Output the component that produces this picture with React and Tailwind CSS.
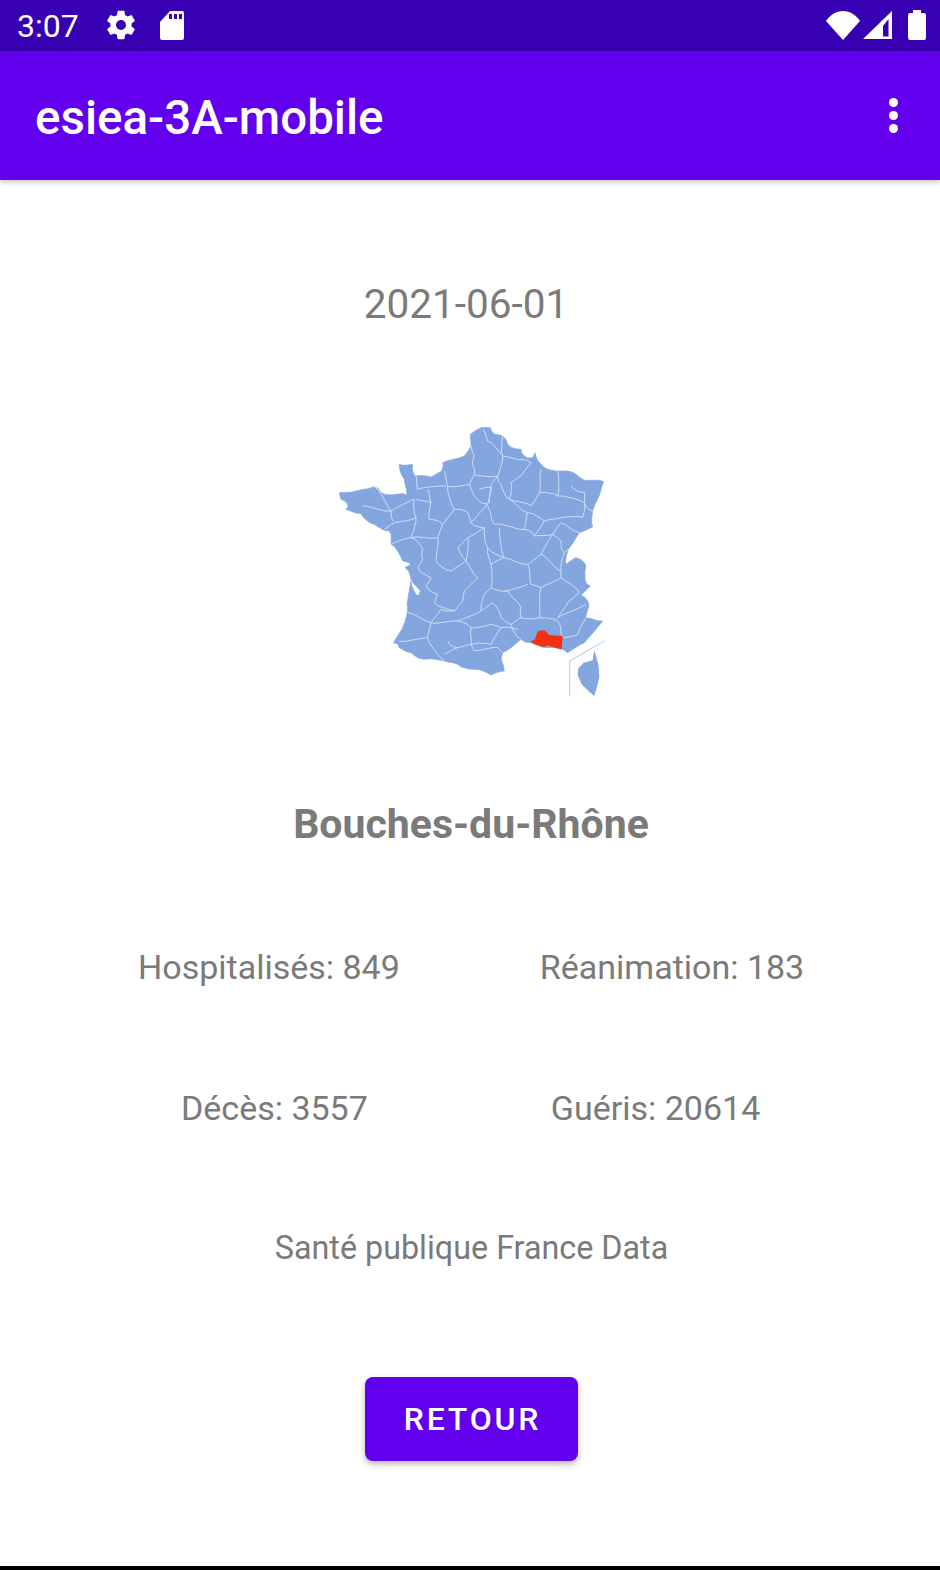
const outline = [
  [418,40],[450,20],[478,20],[490,40],[515,45],[530,70],[570,85],[580,105],[605,110],[612,95],[618,115],[650,145],[690,150],[735,160],[760,178],[818,182],[800,235],[785,270],[785,318],[745,335],[712,385],[705,430],[735,410],[765,435],[762,475],[778,495],[750,522],[774,552],[764,590],[815,600],[782,640],[760,665],[710,695],[695,685],[650,680],[600,665],[570,655],[540,680],[515,695],[512,720],[520,750],[480,762],[430,745],[380,730],[340,720],[280,715],[240,695],[205,680],[188,665],[215,620],[230,560],[240,480],[262,525],[268,510],[240,475],[222,440],[240,430],[215,420],[180,370],[175,330],[130,310],[90,278],[45,265],[52,255],[30,235],[25,215],[75,210],[130,197],[150,215],[195,220],[228,222],[220,175],[205,130],[245,130],[252,165],[300,168],[332,150],[335,125],[400,105],[420,75],
]

const borders = [
  [[455,25],[470,60],[510,100]],
  [[420,75],[430,105],[425,130],[430,160],[500,165],[515,105],[515,45]],
  [[515,105],[580,115],[600,125],[570,165]],
  [[630,145],[625,215],[680,225]],
  [[680,150],[680,225],[760,245]],
  [[720,195],[760,215],[760,245],[785,270]],
  [[570,165],[540,185],[535,235],[600,255],[625,215]],
  [[500,165],[510,190],[535,235]],
  [[430,160],[415,190],[440,235],[470,250],[480,190],[500,165]],
  [[445,205],[480,200],[475,245]],
  [[340,150],[350,195],[415,190]],
  [[255,165],[260,205],[345,195]],
  [[290,205],[300,245],[255,235]],
  [[95,255],[180,270],[185,300]],
  [[130,197],[180,270],[250,235],[255,290],[190,305],[160,325]],
  [[350,195],[370,265],[410,275],[420,305],[470,250]],
  [[300,245],[295,295],[335,310],[370,265]],
  [[470,255],[490,310],[580,325],[590,275],[535,235]],
  [[590,275],[640,300],[690,290],[755,290],[760,245]],
  [[610,345],[640,300]],
  [[580,325],[610,345],[665,340],[690,305]],
  [[690,305],[745,335]],
  [[665,340],[690,360],[700,395],[712,385]],
  [[180,370],[240,350],[255,290]],
  [[240,350],[275,385],[275,415],[260,440],[300,470],[285,495],[320,520],[310,545],[370,570]],
  [[240,350],[320,350],[335,310]],
  [[320,350],[315,420],[360,450],[405,420],[410,350],[460,320],[420,305]],
  [[410,350],[380,380],[405,420]],
  [[405,420],[440,470],[400,510],[395,540],[370,570]],
  [[460,320],[470,380],[520,410],[505,320]],
  [[470,380],[480,430],[480,500],[460,520],[450,570],[380,600]],
  [[520,410],[590,430],[630,400],[665,340]],
  [[590,430],[600,490],[630,500],[625,590]],
  [[630,400],[690,450],[700,395]],
  [[480,430],[520,410]],
  [[480,500],[530,510],[570,560],[570,590],[625,590]],
  [[520,510],[590,490]],
  [[630,500],[690,470],[745,515]],
  [[690,470],[690,450]],
  [[680,590],[765,550]],
  [[680,590],[710,545],[745,515]],
  [[625,590],[680,600],[690,640],[700,650]],
  [[765,590],[740,640],[700,650]],
  [[450,570],[485,545],[510,590],[540,610],[570,590]],
  [[570,655],[540,610]],
  [[230,575],[300,605],[330,565],[370,570]],
  [[300,605],[290,650],[205,660]],
  [[300,605],[380,600],[420,620],[420,670],[380,680]],
  [[420,620],[480,610],[510,620],[480,670],[420,670]],
  [[510,620],[560,625]],
  [[290,650],[340,720]],
  [[350,660],[380,680],[340,700]],
  [[420,670],[430,690],[500,680],[515,695]],
]

// break each segment into short steps with a small fixed offset, so borders look hand traced
function rough(points, closed) {
  const list = closed ? [...points, points[0]] : points
  let d = `M${list[0][0]},${list[0][1]}`
  for (let i = 1; i < list.length; i++) {
    const [x0, y0] = list[i - 1]
    const [x1, y1] = list[i]
    const steps = Math.max(1, Math.round(Math.hypot(x1 - x0, y1 - y0) / 14))
    for (let s = 1; s <= steps; s++) {
      const t = s / steps
      const off = s === steps ? 0 : Math.sin((x0 + y1 + s) * 12.9) * 3.5
      d += ` L${(x0 + (x1 - x0) * t + off).toFixed(1)},${(y0 + (y1 - y0) * t - off).toFixed(1)}`
    }
  }
  return closed ? d + ' Z' : d
}

function FranceMap() {
  return (
    <svg viewBox="0 0 840 840" className="w-[280px] h-[280px] blur-[0.4px]">
      <path d={rough(outline, true)} fill="#84a6df" stroke="#84a6df" strokeWidth="2" strokeLinejoin="round" />
      {borders.map((b, i) => (
        <path key={i} d={rough(b, false)} fill="none" stroke="#d0ddf4" strokeWidth="3" strokeLinejoin="round" />
      ))}
      <path d="M598,662 L612,655 L620,630 L640,628 L655,642 L695,645 L692,685 L672,680 L650,673 L640,678 L615,672 Z" fill="#f5300f" />
      <path d="M790,688 L797,712 L803,735 L805,770 L797,800 L790,825 L770,808 L752,790 L740,762 L742,742 L758,725 L785,718 Z" fill="#84a6df" />
      <path d="M716,826 L716,720 L820,660" fill="none" stroke="#b4c8ea" strokeWidth="3" />
    </svg>
  )
}

function StatusBar() {
  return (
    <div className="h-[51px] bg-[#3700b3] flex items-center text-white shrink-0">
      <span className="ml-[17px] text-[32px] leading-none w-[90px]">3:07</span>
      <svg viewBox="0 0 24 24" className="w-[34px] h-[34px] -ml-[3px] -mt-[1px]" fill="currentColor">
        <path d="M19.43 12.98c.04-.32.07-.64.07-.98s-.03-.66-.07-.98l2.11-1.65c.19-.15.24-.42.12-.64l-2-3.46c-.12-.22-.39-.3-.61-.22l-2.49 1c-.52-.4-1.08-.73-1.69-.98l-.38-2.65C14.46 2.18 14.25 2 14 2h-4c-.25 0-.46.18-.49.42l-.38 2.65c-.61.25-1.17.59-1.69.98l-2.49-1c-.23-.09-.49 0-.61.22l-2 3.46c-.13.22-.07.49.12.64l2.11 1.65c-.04.32-.07.65-.07.98s.03.66.07.98l-2.11 1.65c-.19.15-.24.42-.12.64l2 3.46c.12.22.39.3.61.22l2.49-1c.52.4 1.08.73 1.69.98l.38 2.65c.03.24.24.42.49.42h4c.25 0 .46-.18.49-.42l.38-2.65c.61-.25 1.17-.59 1.69-.98l2.49 1c.23.09.49 0 .61-.22l2-3.46c.12-.22.07-.49-.12-.64l-2.11-1.65zM12 15.5c-1.93 0-3.5-1.57-3.5-3.5s1.57-3.5 3.5-3.5 3.5 1.57 3.5 3.5-1.57 3.5-3.5 3.5z" />
      </svg>
      <svg viewBox="0 0 24 29" className="w-[24px] h-[29px] ml-[22px] -mt-[1px]" fill="currentColor">
        <path fillRule="evenodd" d="M10 0h12a2 2 0 0 1 2 2v25a2 2 0 0 1-2 2H2a2 2 0 0 1-2-2V11zM9 3v5h3V3zM14 3v5h3V3zM19 3v5h3V3z" />
      </svg>
      <div className="ml-auto flex items-center -mt-[1px]">
        <svg viewBox="0 0 34 29" className="w-[34px] h-[29px]" fill="currentColor">
          <path d="M17 29 L0 10 C4 4 10 0 17 0 C24 0 30 4 34 10 Z" />
        </svg>
        <svg viewBox="0 0 29 28" className="w-[29px] h-[28px] ml-[3px]" fill="currentColor">
          <path fillRule="evenodd" d="M0 28 L29 0 V28 Z M20 25.5 H25.5 V8 L20 15 Z" />
        </svg>
        <svg viewBox="0 0 18 30" className="w-[18px] h-[30px] ml-[16px] mr-[14px]" fill="currentColor">
          <path d="M5 0h8v3h3a2 2 0 0 1 2 2v23a2 2 0 0 1-2 2H2a2 2 0 0 1-2-2V5a2 2 0 0 1 2-2h3z" />
        </svg>
      </div>
    </div>
  )
}

function Toolbar() {
  return (
    <div className="h-[129px] bg-[#6200ee] flex items-center text-white shrink-0 shadow-[0_2px_5px_rgba(0,0,0,0.25)] relative">
      <span className="ml-[35px] pt-[7px] text-[47.5px] font-medium leading-none">esiea-3A-mobile</span>
      <div className="ml-auto mr-[42px] flex flex-col gap-[4px]">
        <div className="w-[9px] h-[9px] rounded-full bg-white" />
        <div className="w-[9px] h-[9px] rounded-full bg-white" />
        <div className="w-[9px] h-[9px] rounded-full bg-white" />
      </div>
    </div>
  )
}

export default function App() {
  return (
    <div className="w-[940px] h-[1570px] bg-white flex flex-col overflow-hidden font-['Roboto',sans-serif]">
      <StatusBar />
      <Toolbar />
      <div className="flex-1 flex flex-col text-[#7a7a7a]">
        <p className="mt-[100px] ml-[-8px] text-center text-[40.5px] leading-[48px]">2021-06-01</p>
        <div className="mt-[93px] ml-[331px]">
          <FranceMap />
        </div>
        <p className="mt-[99px] pl-[2px] text-center text-[41px] font-bold leading-[48px]">Bouches-du-Rhône</p>
        <div className="mt-[99px] flex text-[34px] leading-[40px]">
          <span className="ml-[138px]">Hospitalisés: 849</span>
          <span className="ml-[140px]">Réanimation: 183</span>
        </div>
        <div className="mt-[101px] flex text-[34px] leading-[40px]">
          <span className="ml-[181px]">Décès: 3557</span>
          <span className="ml-[183px]">Guéris: 20614</span>
        </div>
        <p className="mt-[100px] pl-[3px] text-center text-[32.3px] leading-[40px]">Santé publique France Data</p>
        <div className="mt-[109px] flex justify-center">
          <button className="ml-[2px] pl-[3px] w-[213px] h-[84px] rounded-[8px] bg-[#6200ee] text-white text-[32px] font-medium tracking-[2.8px] shadow-[0_3px_6px_rgba(0,0,0,0.3)]">
            RETOUR
          </button>
        </div>
      </div>
      <div className="h-[4px] bg-black shrink-0" />
    </div>
  )
}
